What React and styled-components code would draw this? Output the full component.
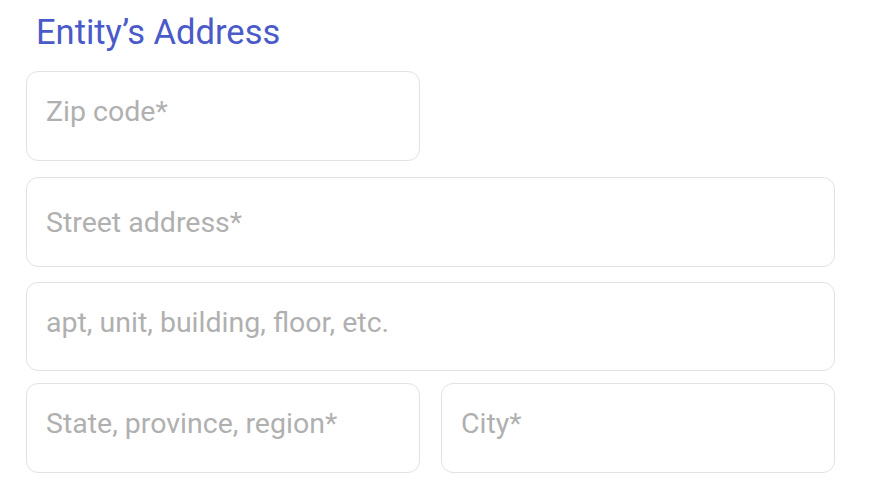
import styled, { createGlobalStyle } from 'styled-components'

const GlobalStyle = createGlobalStyle`
  body {
    margin: 0;
    background: #ffffff;
    font-family: Roboto, "Noto Sans", sans-serif;
  }
`

function App() {
  return (
    <>
      <GlobalStyle />
      <Page>
        <Title>Entity’s Address</Title>
        <Field width="394px" mt="19px" placeholder="Zip code*" />
        <Field mt="16px" pb="0px" placeholder="Street address*" />
        <Field mt="15px" h="89px" pb="9px" placeholder="apt, unit, building, floor, etc." />
        <Row>
          <Field pb="9px" placeholder="State, province, region*" />
          <Field pb="9px" placeholder="City*" />
        </Row>
      </Page>
    </>
  )
}

const Page = styled.div`
  display: flex;
  flex-direction: column;
  padding: 12px 0 0 26px;
  width: 809px;
`

const Title = styled.h2`
  margin: 0 0 0 10px;
  font-family: Roboto, sans-serif;
  font-weight: 400;
  font-size: 34.5px;
  line-height: 40px;
  color: #4a5ac9;
`

const Field = styled.input`
  box-sizing: border-box;
  width: ${(p) => p.width || '100%'};
  height: ${(p) => p.h || '90px'};
  margin-top: ${(p) => p.mt || '0'};
  padding: 0 19px ${(p) => p.pb || '10px'};
  border: 1px solid #e2e2e2;
  border-radius: 12px;
  background: #ffffff;
  font-family: Roboto, sans-serif;
  font-size: 28.5px;
  color: #333;
  outline: none;

  &::placeholder {
    color: #b0b0b0;
  }
`

const Row = styled.div`
  display: grid;
  grid-template-columns: 394px 394px;
  column-gap: 21px;
  margin-top: 12px;
`

export default App
